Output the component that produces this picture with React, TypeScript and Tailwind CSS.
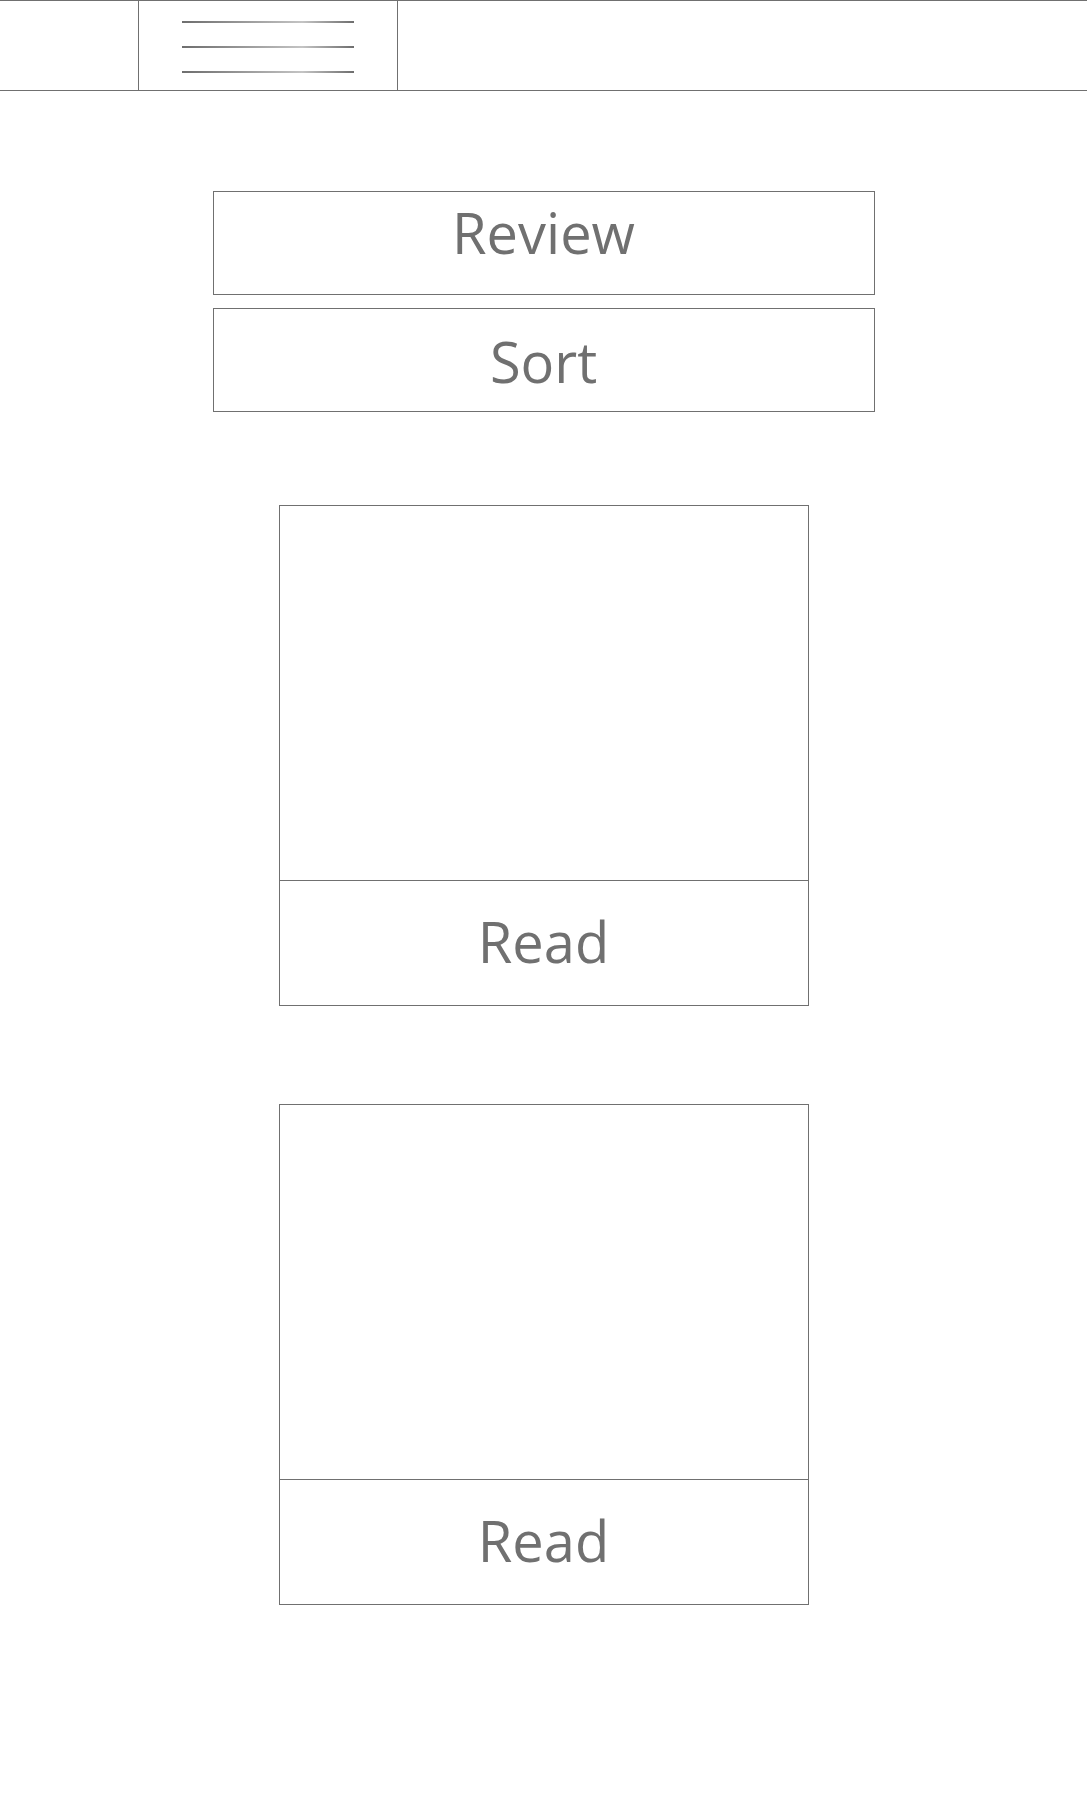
import React from "react";

function Line() {
  return <div className="h-[2px] w-[172px] bg-linear-to-r from-[#6e6e6e] via-[#c4c4c4] via-70% to-[#6e6e6e]" />;
}

function Card() {
  return (
    <div className="flex w-[530px] flex-col border border-[#707070]">
      <div className="h-[375px] border-b border-[#707070]" />
      <div className="flex h-[124px] items-center justify-center pb-[4px] text-[56px] leading-normal text-[#707070]">
        Read
      </div>
    </div>
  );
}

export default function App() {
  return (
    <div className="min-h-[1818px] bg-white font-['Open_Sans',sans-serif]">
      <header className="flex h-[91px] border-y border-[#707070]">
        <div className="w-[138px]" />
        <div className="flex w-[260px] flex-col items-center justify-center gap-[23px] border-x border-[#707070] pt-[2px]">
          <Line />
          <Line />
          <Line />
        </div>
        <div className="flex-1" />
      </header>
      <main className="flex flex-col items-center pt-[100px]">
        <div className="flex h-[104px] w-[662px] items-start justify-center border border-[#707070] pt-[3px] text-[56px] leading-[74px] text-[#707070]">
          Review
        </div>
        <div className="mt-[13px] flex h-[104px] w-[662px] items-start justify-center border border-[#707070] pt-[15px] text-[56px] leading-[74px] text-[#707070]">
          Sort
        </div>
        <div className="mt-[93px]">
          <Card />
        </div>
        <div className="mt-[98px]">
          <Card />
        </div>
      </main>
    </div>
  );
}
